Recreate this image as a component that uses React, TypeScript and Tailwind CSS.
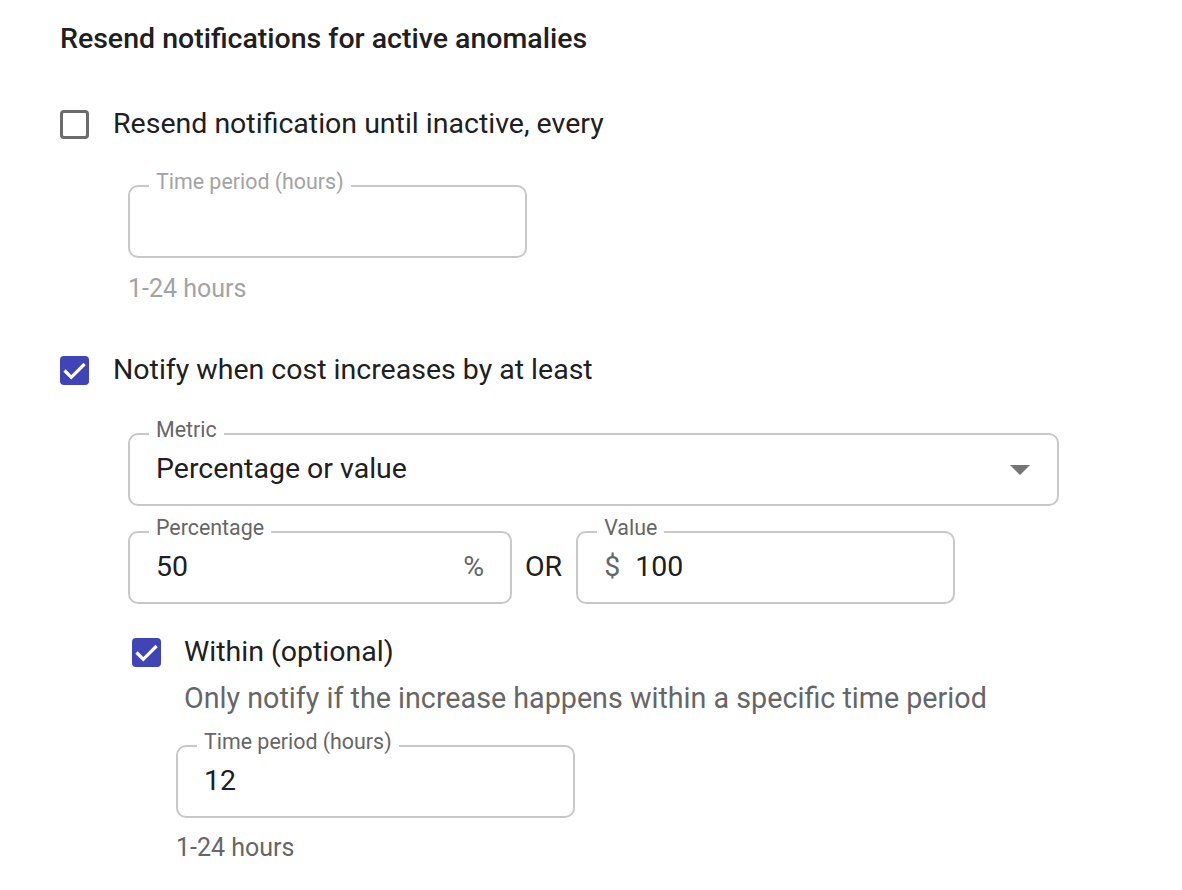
import React from "react";

const font = { fontFamily: "Roboto, 'Liberation Sans', sans-serif" };

function Checkbox({ checked }: { checked?: boolean }) {
  if (checked) {
    return (
      <span className="block h-[29px] w-[29px] shrink-0 rounded-[4px] bg-[#3f45b6]">
        <svg viewBox="0 0 29 29" className="h-[29px] w-[29px]" fill="none">
          <path d="M4.5 14.5L11.3 21.3L24.6 8" stroke="white" strokeWidth="3.2" />
        </svg>
      </span>
    );
  }
  return <span className="block h-[29px] w-[29px] shrink-0 rounded-[4px] border-[3px] border-[#6b6b6b] bg-white" />;
}

function Field({
  label,
  children,
  className,
  disabled,
}: {
  label: string;
  children?: React.ReactNode;
  className?: string;
  disabled?: boolean;
}) {
  return (
    <div className={`relative h-[73px] rounded-[10px] border-2 border-[#c8c8c8] ${className ?? ""}`}>
      <span
        className={`absolute -top-[20px] left-[19px] bg-white px-[7px] text-[21.4px] leading-[30px] ${
          disabled ? "text-[#a3a3a3]" : "text-[#666666]"
        }`}
      >
        {label}
      </span>
      <div className="flex h-full items-center px-[26px] text-[28.5px] text-[#202020]">{children}</div>
    </div>
  );
}

export default function App() {
  return (
    <div style={font} className="min-h-[890px] w-[1182px] bg-white pl-[60px] pt-[24px] text-[#202020]">
      <h2 className="text-[28.5px] font-medium leading-[30px] text-[#202020]">
        Resend notifications for active anomalies
      </h2>

      <label className="mt-[55px] flex items-center gap-[24px]">
        <Checkbox />
        <span className="text-[28.5px] leading-[30px]">Resend notification until inactive, every</span>
      </label>

      <div className="pl-[68px]">
        <Field label="Time period (hours)" disabled className="mt-[46px] w-[399px]" />
        <p className="mt-[18px] text-[25px] leading-[26px] text-[#a3a3a3]">1-24 hours</p>
      </div>

      <label className="mt-[53px] flex items-center gap-[24px]">
        <Checkbox checked />
        <span className="text-[28.5px] leading-[30px]">Notify when cost increases by at least</span>
      </label>

      <div className="pl-[68px]">
        <Field label="Metric" className="mt-[48px] w-[931px]">
          <span className="flex-1">Percentage or value</span>
          <svg viewBox="0 0 20 10" className="mr-[1px] h-[10px] w-[20px]">
            <path d="M0 0h20L10 10z" fill="#757575" />
          </svg>
        </Field>

        <div className="mt-[25px] flex items-center">
          <Field label="Percentage" className="w-[384px]">
            <span className="flex-1">50</span>
            <span className="text-[#666666]">%</span>
          </Field>
          <span className="ml-[13px] mr-[14px] text-[28.5px] text-[#202020]">OR</span>
          <Field label="Value" className="w-[379px]">
            <span className="mr-[15px] text-[#666666]">$</span>
            <span>100</span>
          </Field>
        </div>

        <div className="pl-[4px]">
          <label className="mt-[33px] flex items-center gap-[23px]">
            <Checkbox checked />
            <span className="text-[28.5px] leading-[30px]">Within (optional)</span>
          </label>
          <p className="mt-[14px] pl-[52px] text-[28.7px] leading-[34px] text-[#666666]">
            Only notify if the increase happens within a specific time period
          </p>
        </div>

        <div className="pl-[48px]">
          <Field label="Time period (hours)" className="mt-[30px] w-[399px]">
            <span>12</span>
          </Field>
          <p className="mt-[17px] text-[25px] leading-[26px] text-[#666666]">1-24 hours</p>
        </div>
      </div>
    </div>
  );
}
